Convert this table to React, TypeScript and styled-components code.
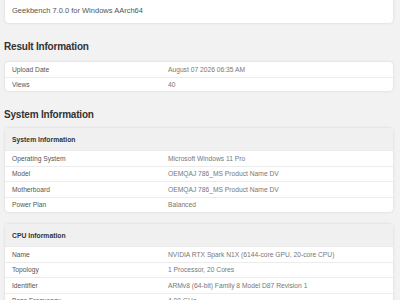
import React from 'react'
import styled, { createGlobalStyle } from 'styled-components'

const GlobalStyle = createGlobalStyle`
  html, body {
    margin: 0;
    padding: 0;
    background: #f2f2f2;
    font-family: "Liberation Sans", Arial, sans-serif;
    color: #555;
  }
`

const Page = styled.div`
  padding: 0 7px 0 5px;
  width: 400px;
  box-sizing: border-box;
  overflow: hidden;
  height: 300px;
`

const Card = styled.div<{ $top?: number }>`
  background: #fff;
  border-radius: 4px;
  box-shadow: 0 0 3px rgba(0, 0, 0, 0.12);
  margin-top: ${(p) => (p.$top !== undefined ? p.$top : 0)}px;
  overflow: hidden;
`

const Version = styled.div`
  font-size: 7.5px;
  line-height: 9px;
  color: #555;
  padding: 14px 7px 8px;
`

const Heading = styled.h2<{ $top: number; $bottom: number }>`
  margin: ${(p) => p.$top}px 0 ${(p) => p.$bottom}px -1px;
  font-size: 10px;
  letter-spacing: -0.2px;
  line-height: 14px;
  font-weight: bold;
  color: #333;
`

const SubHeader = styled.div`
  height: 22px;
  display: flex;
  align-items: center;
  padding: 0 7px;
  background: #f0f0f0;
  font-size: 6.8px;
  font-weight: bold;
  color: #333;
`

const Row = styled.div<{ $h: number }>`
  display: grid;
  grid-template-columns: 156px 1fr;
  align-items: center;
  height: ${(p) => p.$h}px;
  padding: 0 7px;
  font-size: 6.7px;
  border-top: 1px solid #ececec;
  box-sizing: border-box;
  &:first-child {
    border-top: none;
  }
`

const Label = styled.span`
  color: #555;
`

const Value = styled.span`
  color: #777;
`

type Pair = [string, string]

const InfoRows: React.FC<{ rows: Pair[]; h: number }> = ({ rows, h }) => (
  <>
    {rows.map(([k, v]) => (
      <Row key={k} $h={h}>
        <Label>{k}</Label>
        <Value>{v}</Value>
      </Row>
    ))}
  </>
)

const result: Pair[] = [
  ['Upload Date', 'August 07 2026 06:35 AM'],
  ['Views', '40']
]

const system: Pair[] = [
  ['Operating System', 'Microsoft Windows 11 Pro'],
  ['Model', 'OEMQAJ 786_MS Product Name DV'],
  ['Motherboard', 'OEMQAJ 786_MS Product Name DV'],
  ['Power Plan', 'Balanced']
]

const cpu: Pair[] = [
  ['Name', 'NVIDIA RTX Spark N1X (6144-core GPU, 20-core CPU)'],
  ['Topology', '1 Processor, 20 Cores'],
  ['Identifier', 'ARMv8 (64-bit) Family 8 Model D87 Revision 1'],
  ['Base Frequency', '4.00 GHz']
]

export default function App() {
  return (
    <Page>
      <GlobalStyle />
      <Card $top={-8}>
        <Version>Geekbench 7.0.0 for Windows AArch64</Version>
      </Card>
      <Heading $top={17} $bottom={8}>Result Information</Heading>
      <Card>
        <InfoRows rows={result} h={14.5} />
      </Card>
      <Heading $top={17} $bottom={6}>System Information</Heading>
      <Card>
        <SubHeader>System Information</SubHeader>
        <InfoRows rows={system} h={15.5} />
      </Card>
      <Card $top={12}>
        <SubHeader>CPU Information</SubHeader>
        <InfoRows rows={cpu} h={15.5} />
      </Card>
    </Page>
  )
}
